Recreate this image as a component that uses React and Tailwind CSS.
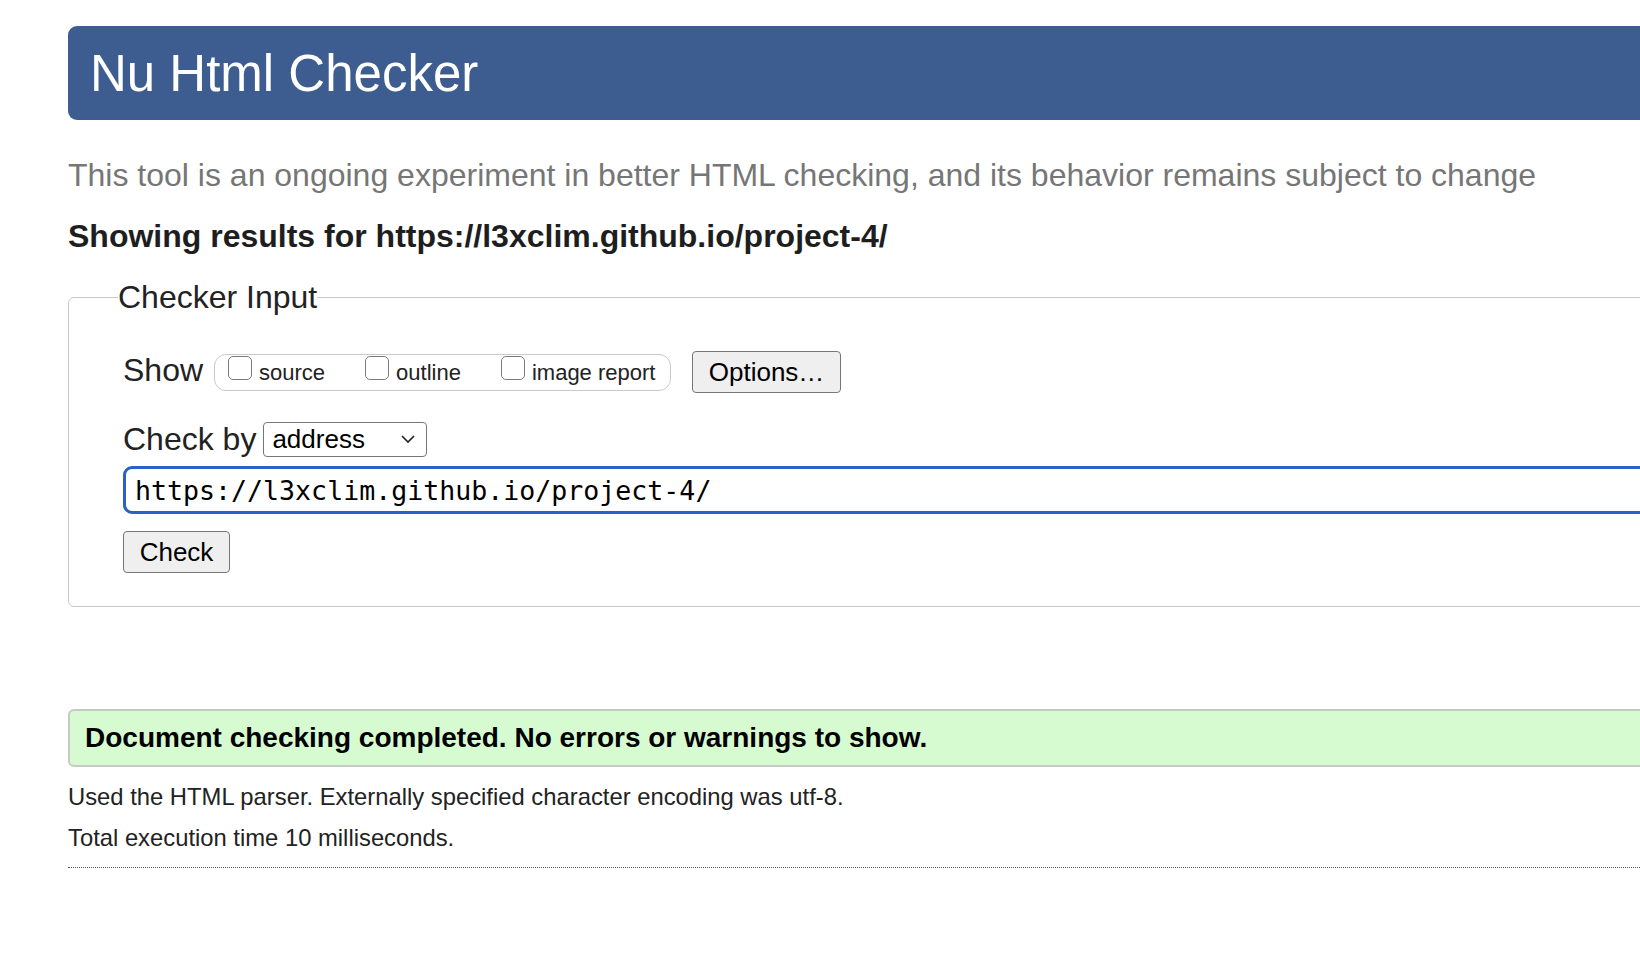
import React from 'react';

// Nu Html Checker results page
const URL = 'https://l3xclim.github.io/project-4/';

function Box({ label }) {
  return (
    <label className="flex items-start">
      <input
        type="checkbox"
        className="appearance-none w-[24px] h-[24px] mt-[1px] border border-[#7a7a7a] rounded-[5px] bg-white"
      />
      <span className="ml-[7px] mt-[4px] text-[22px] leading-[28px]">{label}</span>
    </label>
  );
}

export default function App() {
  return (
    <div className="w-full h-[956px] overflow-hidden bg-white text-[#222] font-['Liberation_Sans',Arial,sans-serif]">
      <div className="ml-[68px] w-[1640px] pt-[26px]">
        <h1 className="h-[94px] flex items-center pl-[22px] bg-[#3d5c8f] rounded-[9px] text-white text-[51px] leading-none">
          Nu Html Checker
        </h1>

        <p className="mt-[35px] text-[32px] leading-[40px] text-[#767676]">
          This tool is an ongoing experiment in better HTML checking, and its behavior remains subject to change
        </p>

        <h2 className="mt-[21px] text-[32px] leading-[40px] font-bold text-[#1e1e1e]">
          Showing results for {URL}
        </h2>

        <fieldset className="mt-[21px] border border-[#c9c9c9] rounded-[6px] pl-[54px] pb-[33px]">
          <legend className="-ml-[5px] text-[32px] leading-[40px]">Checker Input</legend>

          <div className="mt-[34px] flex items-center">
            <span className="text-[32px] leading-[40px] -mt-[4px]">Show</span>
            <div className="ml-[11px] w-[457px] h-[37px] flex items-start border border-[#c9c9c9] rounded-[12px] pl-[13px] gap-[40px]">
              <Box label="source" />
              <Box label="outline" />
              <Box label="image report" />
            </div>
            <button className="ml-[21px] w-[149px] h-[42px] bg-[#efefef] border border-[#767676] rounded-[4px] text-[26px] leading-none text-black">
              Options…
            </button>
          </div>

          <div className="mt-[26px] flex items-center">
            <span className="text-[32px] leading-[40px]">Check by</span>
            <div className="ml-[7px] w-[164px] h-[35px] flex items-center justify-between pl-[8px] pr-[10px] border border-[#767676] rounded-[4px] bg-white text-black">
              <span className="text-[26px] leading-none">address</span>
              <svg width="16" height="10" viewBox="0 0 16 10" fill="none" stroke="#222" strokeWidth="1.6">
                <polyline points="2,2 8,8 14,2" />
              </svg>
            </div>
          </div>

          <input
            type="text"
            readOnly
            value={URL}
            className="mt-[7px] block w-[1600px] h-[48px] border-[3px] border-[#2b5fc9] rounded-[9px] pl-[9px] text-[26.6px] text-black font-['DejaVu_Sans_Mono',monospace] outline-none"
          />

          <button className="mt-[17px] block w-[107px] h-[42px] bg-[#efefef] border border-[#767676] rounded-[4px] text-[26px] leading-none text-black">
            Check
          </button>
        </fieldset>

        <div className="mt-[102px] h-[58px] flex items-center pl-[15px] bg-[#d7fbd1] border-2 border-[#c8c8c8] rounded-[6px]">
          <span className="text-[28px] font-bold text-black leading-none">
            Document checking completed. No errors or warnings to show.
          </span>
        </div>

        <p className="mt-[15px] text-[23.8px] leading-[30px]">
          Used the HTML parser. Externally specified character encoding was utf-8.
        </p>
        <p className="mt-[11px] text-[23.8px] leading-[30px]">Total execution time 10 milliseconds.</p>

        <div className="mt-[14px] border-t border-dotted border-[#555]" />
      </div>
    </div>
  );
}
